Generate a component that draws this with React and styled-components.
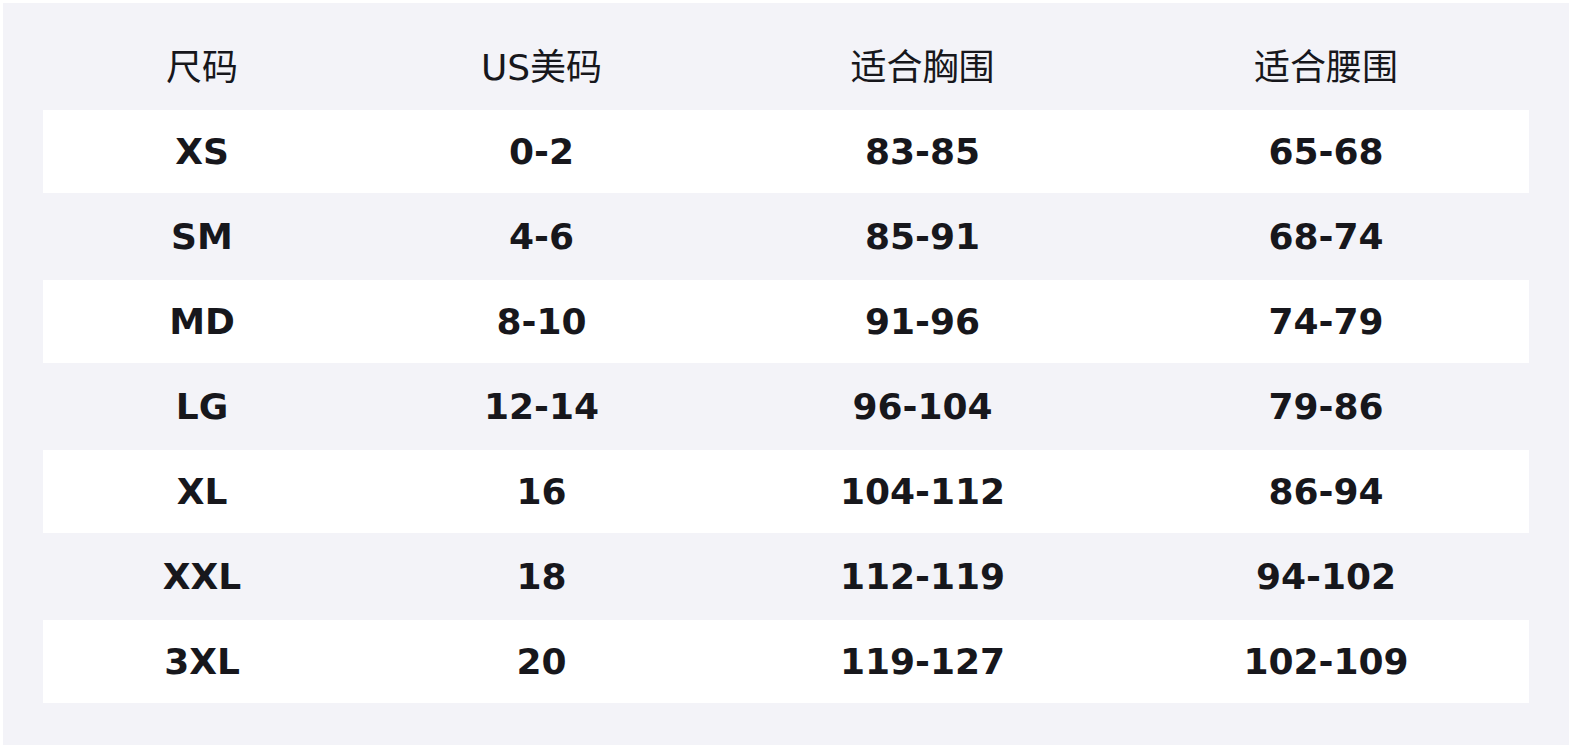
import React from "react";
import styled, { createGlobalStyle } from "styled-components";

const GlobalStyle = createGlobalStyle`
  html, body {
    margin: 0;
    padding: 0;
    background: #ffffff;
  }
`;

const columns = ["尺码", "US美码", "适合胸围", "适合腰围"];
const widths = [318, 361, 401, 406];

const sizes = [
  ["XS", "0-2", "83-85", "65-68"],
  ["SM", "4-6", "85-91", "68-74"],
  ["MD", "8-10", "91-96", "74-79"],
  ["LG", "12-14", "96-104", "79-86"],
  ["XL", "16", "104-112", "86-94"],
  ["XXL", "18", "112-119", "94-102"],
  ["3XL", "20", "119-127", "102-109"],
];

const SizeChart = () => {
  return (
    <Panel>
      <Table>
        <colgroup>
          {widths.map((w, i) => (
            <col key={i} style={{ width: w }} />
          ))}
        </colgroup>
        <thead>
          <tr>
            {columns.map((c) => (
              <HeadCell key={c}>{c}</HeadCell>
            ))}
          </tr>
        </thead>
        <tbody>
          {sizes.map((row, i) => (
            <Row key={row[0]} $striped={i % 2 === 1}>
              {row.map((v, j) => (
                <Cell key={j}>{v}</Cell>
              ))}
            </Row>
          ))}
        </tbody>
      </Table>
    </Panel>
  );
};

const Panel = styled.section`
  margin: 3px;
  padding: 22px 40px 40px;
  background: #f3f3f8;
  font-family: "DejaVu Sans", "Noto Sans CJK SC", sans-serif;
  color: #17171c;
`;

const Table = styled.table`
  width: 1486px;
  border-collapse: collapse;
  table-layout: fixed;
`;

const HeadCell = styled.th`
  height: 77px;
  padding: 0 0 8px;
  font-size: 36px;
  font-weight: 400;
  text-align: center;
  vertical-align: middle;
`;

const Row = styled.tr`
  background: ${({ $striped }) => ($striped ? "#f3f3f8" : "#ffffff")};
  border-bottom: 2px solid #f3f3f8;
`;

const Cell = styled.td`
  height: 83px;
  padding: 0;
  font-size: 36px;
  font-weight: 700;
  text-align: center;
  vertical-align: middle;
`;

export default function App() {
  return (
    <>
      <GlobalStyle />
      <SizeChart />
    </>
  );
}
